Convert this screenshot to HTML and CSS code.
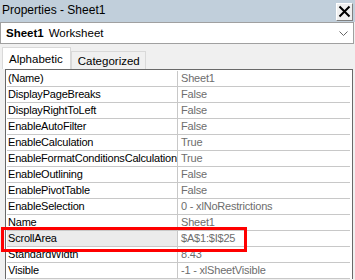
FILE: index.html
```html
<!DOCTYPE html>
<html lang="en">
<head>
  <meta charset="UTF-8">
  <title>Properties - Sheet1</title>
  <link rel="stylesheet" href="styles.css">
</head>
<body>
  <div class="pane">
    <div class="titlebar">
      <span class="title">Properties - Sheet1</span>
      <span class="close-btn">
        <svg width="13" height="13" viewBox="0 0 13 13"><path d="M1.5 1.5 L11.5 11.5 M11.5 1.5 L1.5 11.5" stroke="#000" stroke-width="2"/></svg>
      </span>
    </div>
    <div class="selector">
      <span class="sel-name">Sheet1</span>
      <span class="sel-type">Worksheet</span>
      <svg class="chevron" width="9" height="5" viewBox="0 0 9 5"><path d="M0.5 0.5 L4.5 4.5 L8.5 0.5" fill="none" stroke="#666" stroke-width="1"/></svg>
    </div>
    <div class="tabs">
      <div class="tab active">Alphabetic</div>
      <div class="tab">Categorized</div>
    </div>
    <div class="grid">
      <div class="row"><div class="prop">(Name)</div><div class="val">Sheet1</div></div>
      <div class="row"><div class="prop">DisplayPageBreaks</div><div class="val">False</div></div>
      <div class="row"><div class="prop">DisplayRightToLeft</div><div class="val">False</div></div>
      <div class="row"><div class="prop">EnableAutoFilter</div><div class="val">False</div></div>
      <div class="row"><div class="prop">EnableCalculation</div><div class="val">True</div></div>
      <div class="row"><div class="prop">EnableFormatConditionsCalculation</div><div class="val">True</div></div>
      <div class="row"><div class="prop">EnableOutlining</div><div class="val">False</div></div>
      <div class="row"><div class="prop">EnablePivotTable</div><div class="val">False</div></div>
      <div class="row"><div class="prop">EnableSelection</div><div class="val">0 - xlNoRestrictions</div></div>
      <div class="row"><div class="prop">Name</div><div class="val">Sheet1</div></div>
      <div class="row selected"><div class="prop">ScrollArea</div><div class="val">$A$1:$I$25</div></div>
      <div class="row"><div class="prop">StandardWidth</div><div class="val">8.43</div></div>
      <div class="row"><div class="prop">Visible</div><div class="val">-1 - xlSheetVisible</div></div>
    </div>
    <div class="highlight"></div>
  </div>
</body>
</html>
```

FILE: styles.css
```css
body { margin:0; background:#f0f0f0; }
.pane {
  position: relative;
  width: 355px;
  height: 280px;
  overflow: hidden;
  font-family: 'Liberation Sans', Arial, sans-serif;
  font-size: 12px;
  color: #000;
  background: #f0f0f0;
}
.titlebar {
  height: 22px;
  background: #c1cfdb;
  display: flex;
  align-items: center;
  justify-content: space-between;
  padding-left: 2px;
}
.title { font-size: 12px; line-height: 1; margin-top: -2px; }
.close-btn {
  width: 17px;
  height: 18px;
  margin-right: 2px;
  margin-top: 1px;
  background: #f0f0f0;
  border-top: 1px solid #fff;
  border-left: 1px solid #fff;
  border-right: 1px solid #808080;
  border-bottom: 1px solid #808080;
  box-sizing: border-box;
  display: flex;
  align-items: center;
  justify-content: center;
}
.selector {
  height: 22px;
  margin-right: 1px;
  background: #fff;
  border: 1px solid #a0a0a0;
  box-sizing: border-box;
  display: flex;
  align-items: center;
  padding-left: 5px;
  gap: 5px;
  font-size: 11.5px;
}
.sel-name { font-weight: 700; }
.chevron { margin-left: auto; margin-right: 5px; }
.tabs {
  height: 25px;
  display: flex;
  align-items: flex-end;
  padding-left: 2px;
  box-sizing: border-box;
  font-size: 11.5px;
}
.tab {
  height: 18px;
  padding: 0 5px 0 6px;
  background: #f0f0f0;
  border: 1px solid #d9d9d9;
  border-bottom: none;
  display: flex;
  align-items: center;
  box-sizing: border-box;
}
.tab.active {
  height: 22px;
  background: #fff;
  border-color: #d9d9d9;
  padding: 0 7px 0 6px;
}
.grid {
  margin: 0 2px 0 5px;
  border: 1px solid #696969;
  border-bottom: none;
  background: #fff;
  padding: 1px 2px 0 1px;
}
.row {
  display: grid;
  grid-template-columns: 171px 1fr;
  height: 16px;
  box-sizing: border-box;
  border-bottom: 1px solid #c8c8c8;
  line-height: 15px;
  white-space: nowrap;
  font-size: 11px;
  letter-spacing: -0.2px;
}
.prop {
  padding-left: 1px;
  border-right: 1px solid #c8c8c8;
  overflow: hidden;
}
.val { padding-left: 3px; color: #6d6d6d; overflow: hidden; }
.row.selected .prop { background: #ebebeb; }
.highlight {
  position: absolute;
  left: 1px;
  top: 227px;
  width: 246px;
  height: 25px;
  border: 3px solid #f00;
  box-sizing: border-box;
}
```
